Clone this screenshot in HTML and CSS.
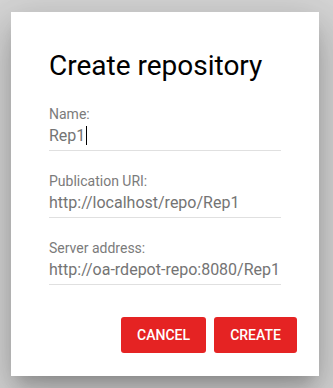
FILE: index.html
```html
<!DOCTYPE html>
<html lang="en">
<head>
    <meta charset="UTF-8">
    <meta name="viewport" content="width=device-width, initial-scale=1.0">
    <title>Create repository</title>

    <link rel="stylesheet" href="styles.css">
</head>
<body>
    <div class="dialog">
        <p class="title">Create repository</p>

        <div class="fields">
            <div class="field">
                <label class="label">Name:</label>
                <div class="value">Rep1<span class="caret"></span></div>
            </div>

            <div class="field">
                <label class="label">Publication URI:</label>
                <div class="value">http://localhost/repo/Rep1</div>
            </div>

            <div class="field">
                <label class="label">Server address:</label>
                <div class="value">http://oa-rdepot-repo:8080/Rep1</div>
            </div>
        </div>

        <div class="actions">
            <button class="btn-red">Cancel</button>
            <button class="btn-red">Create</button>
        </div>
    </div>
</body>
</html>
```

FILE: styles.css
```css
* {
    margin: 0;
    padding: 0;
    box-sizing: border-box;
}


html, body {
    width: 100vw;
    height: 100vh;
}

html {
    background: #d6d6d6;
}

body {
    padding: 12px 14px 12px 11px;
    font-family: Roboto, "Liberation Sans", sans-serif;
}


.dialog {
    width: 308px;
    height: 364px;
    padding: 38px 22px 0 38px;
    background: #ffffff;
    box-shadow: 0 11px 15px -7px rgba(0, 0, 0, 0.2),
                0 24px 38px 3px rgba(0, 0, 0, 0.14),
                0 9px 46px 8px rgba(0, 0, 0, 0.12);
}

.title {
    font-size: 28px;
    line-height: 32px;
    color: #000000;
    margin-bottom: 24px;
}


.fields {
    width: 232px;
    display: flex;
    flex-direction: column;
    gap: 22px;
}

.field {
    display: flex;
    flex-direction: column;
    gap: 4px;
}

.field .label {
    font-size: 14px;
    line-height: 16px;
    color: #7b7b7b;
}

.field .value {
    font-size: 16px;
    line-height: 20px;
    padding-bottom: 4px;
    color: #747474;
    border-bottom: 1px solid #e0e0e0;
}

.field .value .caret {
    display: inline-block;
    width: 1px;
    height: 19px;
    margin-left: 1px;
    vertical-align: -4px;
    background: #000000;
}


.actions {
    display: flex;
    justify-content: flex-end;
    gap: 8px;
    margin-top: 32px;
}

.btn-red {
    height: 36px;
    padding: 0 16px;
    min-width: 83px;
    border: none;
    border-radius: 3px;
    background: #e52323;
    color: #ffffff;
    font-family: Roboto, "Liberation Sans", sans-serif;
    font-size: 14px;
    font-weight: 500;
    text-transform: uppercase;
}
```
